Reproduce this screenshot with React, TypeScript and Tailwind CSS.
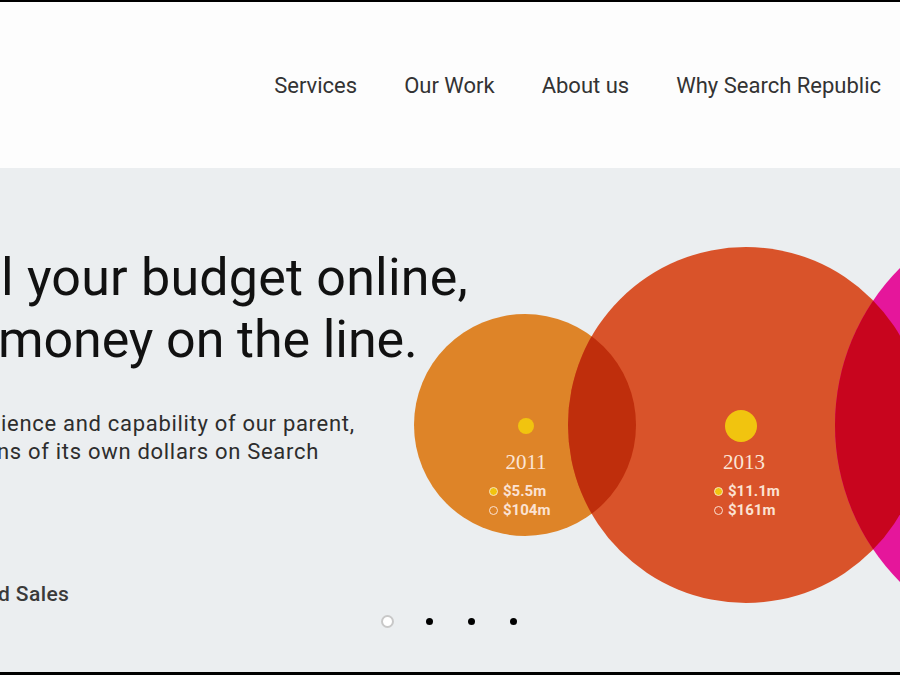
import React from "react";

const navItems = ["Services", "Our Work", "About us", "Why Search Republic"];

const Stat = ({ yearX, rowX, year, filled, hollow }: { yearX: number; rowX: number; year: string; filled: string; hollow: string }) => (
  <>
    <div
      className="absolute top-[279px] -translate-x-1/2 text-[21px] leading-[30px] text-[#fbe5d6]"
      style={{ left: yearX, fontFamily: '"Liberation Serif", serif' }}
    >
      {year}
    </div>
    <div className="absolute top-[314px] flex flex-col gap-[1px] text-[15px] font-bold leading-[18px] text-[#fbe2d3]" style={{ left: rowX }}>
      <div className="flex items-center gap-[5px]">
        <span className="h-[9px] w-[9px] rounded-full border border-[#f7e3c0] bg-[#f1c40f]" />
        <span>{filled}</span>
      </div>
      <div className="flex items-center gap-[5px]">
        <span className="h-[9px] w-[9px] rounded-full border border-[#fbe2d3]" />
        <span>{hollow}</span>
      </div>
    </div>
  </>
);

export default function App() {
  return (
    <div className="h-[675px] w-[900px] overflow-hidden border-t-2 border-b-[3px] border-black bg-white" style={{ fontFamily: 'Roboto, "Liberation Sans", sans-serif' }}>
      <header className="flex h-[166px] items-center justify-end bg-[#fdfdfd] pr-[19px]">
        <nav className="flex gap-[47px] text-[22px] text-[#333]">
          {navItems.map((n) => (
            <span key={n}>{n}</span>
          ))}
        </nav>
      </header>

      <section className="relative h-[504px] overflow-hidden bg-[#ebeef0]">
        <svg className="absolute left-0 top-0" width="900" height="504" viewBox="0 0 900 504">
          <defs>
            <clipPath id="orange">
              <circle cx="525" cy="257" r="111" />
            </clipPath>
            <clipPath id="red">
              <circle cx="746" cy="257" r="178" />
            </clipPath>
          </defs>
          <circle cx="525" cy="257" r="111" fill="#de8428" />
          <circle cx="746" cy="257" r="178" fill="#d9532a" />
          <circle cx="746" cy="257" r="178" fill="#bf2e0c" clipPath="url(#orange)" />
          <circle cx="1057" cy="257" r="222" fill="#e5169b" />
          <circle cx="1057" cy="257" r="222" fill="#c8051e" clipPath="url(#red)" />
          <circle cx="526" cy="258" r="8" fill="#f1c40f" />
          <circle cx="741" cy="258" r="16" fill="#f1c40f" />
        </svg>

        <Stat yearX={526} rowX={489} year="2011" filled="$5.5m" hollow="$104m" />
        <Stat yearX={744} rowX={714} year="2013" filled="$11.1m" hollow="$161m" />

        <div className="relative pt-[79px]">
          <h1 className="text-[52px] leading-[62px] tracking-[0.2px] text-[#111]">
            <div className="ml-[1px]">l your budget online,</div>
            <div className="-ml-[2px] tracking-[-0.1px]">money on the line.</div>
          </h1>
          <p className="mt-[39px] text-[22px] leading-[28px] tracking-[0.7px] text-[#2d2d2d]">
            <span className="block ml-[1px]">ience and capability of our parent,</span>
            <span className="block -ml-[3px]">ns of its own dollars on Search</span>
          </p>
          <div className="mt-[116px] -ml-[2px] text-[21px] font-medium leading-[24px] tracking-[0.4px] text-[#3a3a3a]">d Sales</div>
        </div>

        <div className="absolute bottom-[44px] left-0 right-0 flex items-center justify-center gap-[35px] pr-[2px]">
          <span className="-mr-[3px] h-[13px] w-[13px] rounded-full border-2 border-[#c8c8c8] bg-white" />
          <span className="h-[7px] w-[7px] rounded-full bg-black" />
          <span className="h-[7px] w-[7px] rounded-full bg-black" />
          <span className="h-[7px] w-[7px] rounded-full bg-black" />
        </div>
      </section>
    </div>
  );
}
